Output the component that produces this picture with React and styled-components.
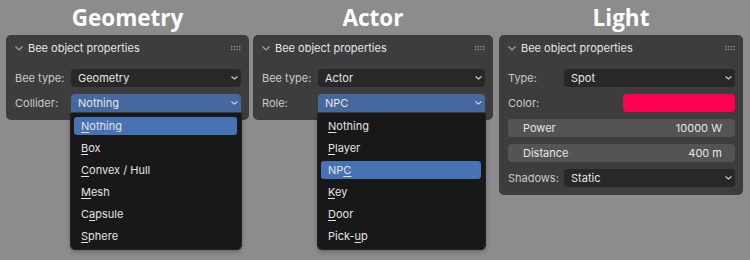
import React from 'react';
import styled, { createGlobalStyle } from 'styled-components';

const GlobalStyle = createGlobalStyle`
  html, body {
    margin: 0;
    padding: 0;
    background: #8c8c8c;
  }
  body {
    width: 750px;
    height: 260px;
    overflow: hidden;
    font-family: Inter, "Noto Sans", sans-serif;
  }
`

const Page = styled.div`
  display: flex;
  align-items: flex-start;
  padding-left: 6px;
  gap: 4px;
`

const Column = styled.div`
  display: flex;
  flex-direction: column;
  width: ${p => p.w}px;
  margin-right: ${p => p.mr || 0}px;
`

const Title = styled.div`
  height: 35px;
  line-height: 36px;
  text-align: center;
  color: #ffffff;
  font-family: "Open Sans", sans-serif;
  font-weight: 700;
  font-size: 22.5px;
`

const Panel = styled.div`
  position: relative;
  background: #3d3d3d;
  border-radius: 5px;
  padding-bottom: 8px;
`

const Header = styled.div`
  height: 26px;
  display: flex;
  align-items: center;
  padding: 0 7px 0 9px;
  color: #e6e6e6;
  font-size: 11px;
`

const HeaderText = styled.span`
  margin-left: 5px;
  flex: 1;
  white-space: nowrap;
`

const Body = styled.div`
  display: flex;
  flex-direction: column;
  gap: 7px;
  padding: 8px 8px 0 9px;
`

const Row = styled.div`
  display: flex;
  align-items: center;
  height: 18px;
`

const Label = styled.div`
  width: 56px;
  flex-shrink: 0;
  white-space: nowrap;
  color: #cacaca;
  font-size: 11px;
`

const SelectWrap = styled.div`
  position: relative;
  flex: 1;
  height: 18px;
`

const Select = styled.div`
  height: 18px;
  box-sizing: border-box;
  display: flex;
  align-items: center;
  justify-content: space-between;
  padding: 0 3px 0 7px;
  border-radius: ${p => (p.open ? '4px 4px 0 0' : '4px')};
  background: ${p => (p.open ? '#45699e' : '#282828')};
  color: #e6e6e6;
  font-size: 11px;
`

const Menu = styled.div`
  position: absolute;
  top: 19px;
  left: -1px;
  right: -1px;
  z-index: 5;
  background: #181818;
  border: 1px solid #222;
  border-top: none;
  border-radius: 0 0 5px 5px;
  padding: 2px 4px 2px 3px;
  box-shadow: 0 2px 4px rgba(0, 0, 0, 0.25);
`

const MenuItem = styled.div`
  height: 22px;
  display: flex;
  align-items: center;
`

const MenuItemInner = styled.div`
  flex: 1;
  height: 18px;
  display: flex;
  align-items: center;
  padding-left: 7px;
  border-radius: 3px;
  background: ${p => (p.active ? '#4772b3' : 'transparent')};
  color: #e3e3e3;
  font-size: 11px;
  u {
    text-underline-offset: 2px;
  }
`

const Swatch = styled.div`
  margin-left: auto;
  width: 112px;
  height: 18px;
  border-radius: 4px;
  background: #ff0050;
`

const Field = styled.div`
  flex: 1;
  height: 18px;
  display: flex;
  align-items: center;
  justify-content: space-between;
  padding: 0 13px 0 15px;
  border-radius: 4px;
  background: #545454;
  color: #e6e6e6;
  font-size: 11px;
`

const Chevron = ({ color = '#cfcfcf', w = 7, h = 4 }) => (
  <svg width={w + 1} height={h + 1} viewBox={`0 0 ${w + 1} ${h + 1}`}>
    <path d={`M0.5 0.5 L${(w + 1) / 2} ${h} L${w + 0.5} 0.5`} fill="none" stroke={color} strokeWidth="1.1" />
  </svg>
)

const Grip = () => (
  <svg width="11" height="5" viewBox="0 0 11 5">
    {[0, 1].map(r =>
      [0, 1, 2, 3].map(c => (
        <rect key={r + '-' + c} x={c * 2.7} y={r * 2.8} width="1.3" height="1.3" fill="#9a9a9a" />
      ))
    )}
  </svg>
)

const PanelHeader = () => (
  <Header>
    <Chevron color="#a8a8a8" w={7} h={4} />
    <HeaderText>Bee object properties</HeaderText>
    <Grip />
  </Header>
)

// label text with one letter underlined
const Mnemonic = ({ text, at }) => (
  <span>
    {text.slice(0, at)}
    <u>{text[at]}</u>
    {text.slice(at + 1)}
  </span>
)

const DropDown = ({ value, open, items, active }) => (
  <SelectWrap>
    <Select open={open}>
      <span>{value}</span>
      <Chevron w={6} h={3} />
    </Select>
    {open && (
      <Menu>
        {items.map((it, i) => (
          <MenuItem key={it[0]}>
            <MenuItemInner active={i === active}>
              <Mnemonic text={it[0]} at={it[1]} />
            </MenuItemInner>
          </MenuItem>
        ))}
      </Menu>
    )}
  </SelectWrap>
)

const colliders = [['Nothing', 0], ['Box', 0], ['Convex / Hull', 0], ['Mesh', 0], ['Capsule', 1], ['Sphere', 0]]
const roles = [['Nothing', 0], ['Player', 0], ['NPC', 2], ['Key', 0], ['Door', 0], ['Pick-up', 5]]

export default function App() {
  return (
    <>
      <GlobalStyle />
      <Page>
        <Column w={243}>
          <Title>Geometry</Title>
          <Panel>
            <PanelHeader />
            <Body>
              <Row>
                <Label>Bee type:</Label>
                <DropDown value="Geometry" />
              </Row>
              <Row>
                <Label>Collider:</Label>
                <DropDown value="Nothing" open items={colliders} active={0} />
              </Row>
            </Body>
          </Panel>
        </Column>
        <Column w={240} mr={2}>
          <Title>Actor</Title>
          <Panel>
            <PanelHeader />
            <Body>
              <Row>
                <Label>Bee type:</Label>
                <DropDown value="Actor" />
              </Row>
              <Row>
                <Label>Role:</Label>
                <DropDown value="NPC" open items={roles} active={2} />
              </Row>
            </Body>
          </Panel>
        </Column>
        <Column w={244}>
          <Title>Light</Title>
          <Panel>
            <PanelHeader />
            <Body>
              <Row>
                <Label>Type:</Label>
                <DropDown value="Spot" />
              </Row>
              <Row>
                <Label>Color:</Label>
                <Swatch />
              </Row>
              <Row>
                <Field>
                  <span>Power</span>
                  <span>10000 W</span>
                </Field>
              </Row>
              <Row>
                <Field>
                  <span>Distance</span>
                  <span>400 m</span>
                </Field>
              </Row>
              <Row>
                <Label>Shadows:</Label>
                <DropDown value="Static" />
              </Row>
            </Body>
          </Panel>
        </Column>
      </Page>
    </>
  )
}
